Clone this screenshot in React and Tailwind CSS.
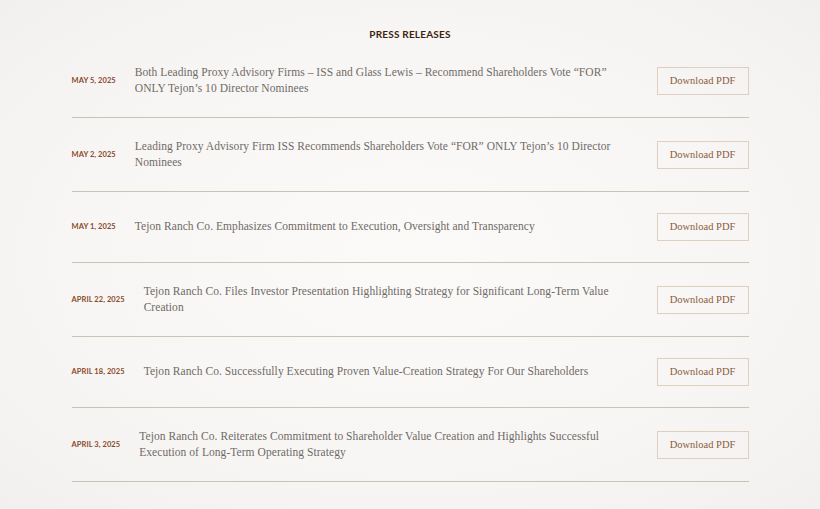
import React from 'react';

const releases = [
  {
    date: 'MAY 5, 2025',
    lines: ['Both Leading Proxy Advisory Firms – ISS and Glass Lewis – Recommend Shareholders Vote “FOR”', 'ONLY Tejon’s 10 Director Nominees'],
  },
  {
    date: 'MAY 2, 2025',
    lines: ['Leading Proxy Advisory Firm ISS Recommends Shareholders Vote “FOR” ONLY Tejon’s 10 Director', 'Nominees'],
  },
  {
    date: 'MAY 1, 2025',
    lines: ['Tejon Ranch Co. Emphasizes Commitment to Execution, Oversight and Transparency'],
  },
  {
    date: 'APRIL 22, 2025',
    lines: ['Tejon Ranch Co. Files Investor Presentation Highlighting Strategy for Significant Long-Term Value', 'Creation'],
  },
  {
    date: 'APRIL 18, 2025',
    lines: ['Tejon Ranch Co. Successfully Executing Proven Value-Creation Strategy For Our Shareholders'],
  },
  {
    date: 'APRIL 3, 2025',
    lines: ['Tejon Ranch Co. Reiterates Commitment to Shareholder Value Creation and Highlights Successful', 'Execution of Long-Term Operating Strategy'],
  },
];

function ReleaseRow({ date, lines }) {
  return (
    <div className="flex items-center gap-[19px] border-b border-[#cbc2b6] py-[21px]">
      <div className="shrink-0 font-['Lato',sans-serif] text-[7.5px] font-bold tracking-[0.01em] text-[#8b4a2b]">
        {date}
      </div>
      <div className="flex-1 font-['Liberation_Serif',serif] text-[11.5px] leading-[15.5px] tracking-[0.005em] text-[#6f6a66]">
        {lines.map((l, i) => (
          <div key={i} className="whitespace-nowrap">{l}</div>
        ))}
      </div>
      <button className="h-[28px] w-[92px] shrink-0 border border-[#ddd0c3] bg-transparent font-['Liberation_Serif',serif] text-[10.5px] text-[#8c5a3c]">
        Download PDF
      </button>
    </div>
  );
}

export default function App() {
  return (
    <div className="min-h-[509px] w-full bg-[radial-gradient(ellipse_at_center,#fbfaf9_0%,#f8f6f4_60%,#f2f0ee_100%)]">
      <div className="mx-auto w-[677px] pt-[27px]">
        <h2 className="mb-[3px] text-center font-['Lato',sans-serif] text-[10px] font-bold leading-[14px] tracking-[0.02em] text-[#3d1f0f]">
          PRESS RELEASES
        </h2>
        {releases.map((r) => (
          <ReleaseRow key={r.date} {...r} />
        ))}
      </div>
    </div>
  );
}
